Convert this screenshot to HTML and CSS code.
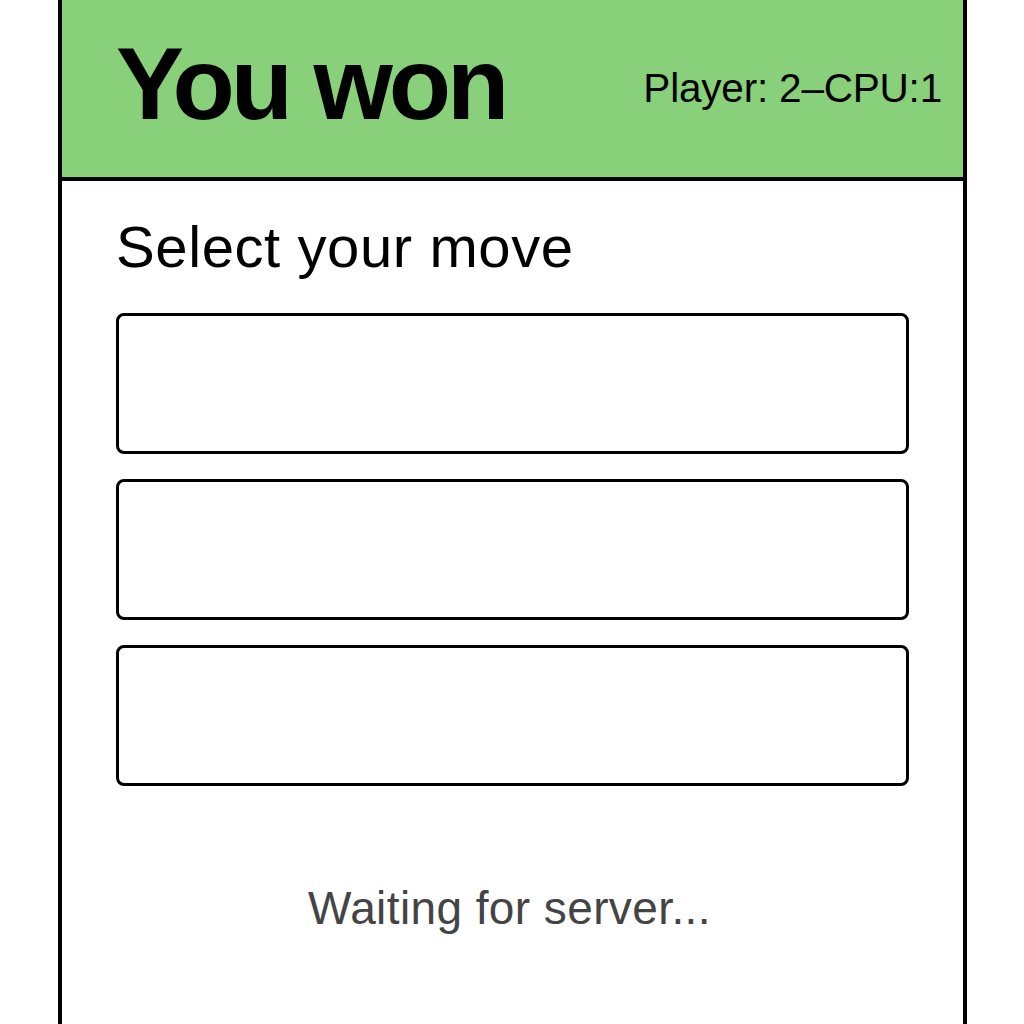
FILE: index.html
```html
<!DOCTYPE html>
<html lang="en">
<head>
<meta charset="utf-8">
<title>You won</title>
<link rel="stylesheet" href="styles.css">
</head>
<body>
<div class="frame">
  <header class="header">
    <h1 class="result">You won</h1>
    <div class="score">Player: 2–CPU:1</div>
  </header>
  <main class="content">
    <h2 class="prompt">Select your move</h2>
    <div class="moves">
      <button class="move" type="button"></button>
      <button class="move" type="button"></button>
      <button class="move" type="button"></button>
    </div>
    <p class="status">Waiting for server...</p>
  </main>
</div>
</body>
</html>
```

FILE: styles.css
```css
html, body {
  margin: 0;
  padding: 0;
  background: #ffffff;
}
body {
  font-family: "Liberation Sans", Arial, Helvetica, sans-serif;
  color: #000;
  height: 1024px;
  overflow: hidden;
}
.frame {
  margin-left: 58px;
  width: 909px;
  height: 1024px;
  box-sizing: border-box;
  border-left: 4px solid #000;
  border-right: 4px solid #000;
  display: flex;
  flex-direction: column;
}
.header {
  height: 181px;
  box-sizing: border-box;
  background: #88d07a;
  border-bottom: 4px solid #000;
  display: flex;
  justify-content: space-between;
  align-items: flex-start;
  padding: 33px 21px 0 54px;
}
.result {
  margin: 0;
  font-size: 102px;
  line-height: 1;
  font-weight: 700;
  letter-spacing: -4px;
}
.score {
  margin-top: 35px;
  font-size: 40.5px;
  line-height: 1;
  letter-spacing: -0.2px;
}
.content {
  padding: 37px 54px 0 54px;
  display: flex;
  flex-direction: column;
}
.prompt {
  margin: 0;
  font-size: 58px;
  line-height: 1;
  font-weight: 400;
  letter-spacing: 0.6px;
}
.moves {
  margin-top: 37px;
  display: flex;
  flex-direction: column;
  gap: 25px;
}
.move {
  display: block;
  width: 100%;
  height: 141px;
  box-sizing: border-box;
  border: 3px solid #000;
  border-radius: 8px;
  background: #fff;
  padding: 0;
  margin: 0;
}
.status {
  margin: 99px 6px 0 0;
  text-align: center;
  font-size: 46px;
  line-height: 1;
  color: #444;
  letter-spacing: 0.4px;
}
```
